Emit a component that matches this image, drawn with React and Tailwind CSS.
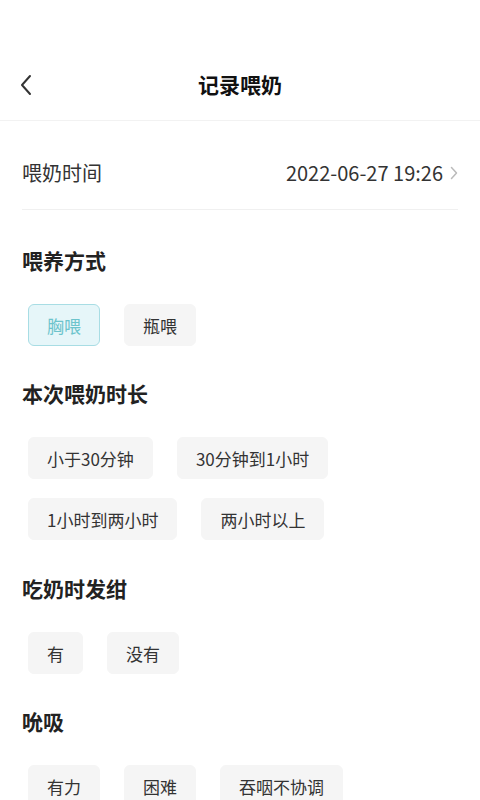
import { useState } from 'react';

const font = { fontFamily: '"Noto Sans CJK SC", "Noto Sans", sans-serif' };

function Chip({ label, active, onClick }) {
  return (
    <button
      onClick={onClick}
      className={
        active
          ? 'h-[42px] px-[18px] rounded-[6px] border border-[#a8dde4] bg-[#e6f6f9] text-[17px] text-[#6cc4cc] leading-none'
          : 'h-[42px] px-[18px] rounded-[6px] border border-[#f5f5f5] bg-[#f5f5f5] text-[17px] text-[#333] leading-none'
      }
    >
      {label}
    </button>
  );
}

function Section({ title, options, value, onChange, mt }) {
  return (
    <div className={mt}>
      <h2 className="text-[21px] leading-[28px] font-bold text-[#222]">{title}</h2>
      <div className="mt-[30px] pl-[6px] flex flex-wrap gap-x-[24px] gap-y-[19px]">
        {options.map((o) => (
          <Chip key={o} label={o} active={value === o} onClick={() => onChange(o)} />
        ))}
      </div>
    </div>
  );
}

export default function App() {
  const [mode, setMode] = useState('胸喂');
  const [duration, setDuration] = useState(null);
  const [cyanosis, setCyanosis] = useState(null);
  const [suck, setSuck] = useState(null);

  return (
    <div className="w-[480px] h-[800px] overflow-hidden bg-white" style={font}>
      <div className="h-[50px]" />
      {/* header */}
      <div className="h-[71px] flex items-center px-[18px] border-b border-[#f2f2f2]">
        <svg width="16" height="24" viewBox="0 0 16 24" fill="none" stroke="#333" strokeWidth="2" strokeLinecap="round" strokeLinejoin="round">
          <path d="M12 3 L4 12 L12 21" />
        </svg>
        <h1 className="flex-1 text-center text-[21px] font-bold text-[#111]">记录喂奶</h1>
        <div className="w-[16px]" />
      </div>

      <div className="px-[22px]">
        {/* time row */}
        <div className="pt-[40px] pb-[24px] flex items-center justify-between border-b border-[#f0f0f0]">
          <span className="text-[20px] leading-[24px] text-[#333]">喂奶时间</span>
          <span className="flex items-center gap-[7px] text-[20px] leading-[24px] text-[#333]">
            2022-06-27 19:26
            <svg width="8" height="14" viewBox="0 0 8 14" fill="none" stroke="#bbb" strokeWidth="1.5" strokeLinecap="round" strokeLinejoin="round">
              <path d="M1.5 1.5 L6.5 7 L1.5 12.5" />
            </svg>
          </span>
        </div>

        <Section mt="mt-[36px]" title="喂养方式" options={['胸喂', '瓶喂']} value={mode} onChange={setMode} />
        <Section
          mt="mt-[33px]"
          title="本次喂奶时长"
          options={['小于30分钟', '30分钟到1小时', '1小时到两小时', '两小时以上']}
          value={duration}
          onChange={setDuration}
        />
        <Section mt="mt-[34px]" title="吃奶时发绀" options={['有', '没有']} value={cyanosis} onChange={setCyanosis} />
        <Section mt="mt-[33px]" title="吮吸" options={['有力', '困难', '吞咽不协调']} value={suck} onChange={setSuck} />
      </div>
    </div>
  );
}
